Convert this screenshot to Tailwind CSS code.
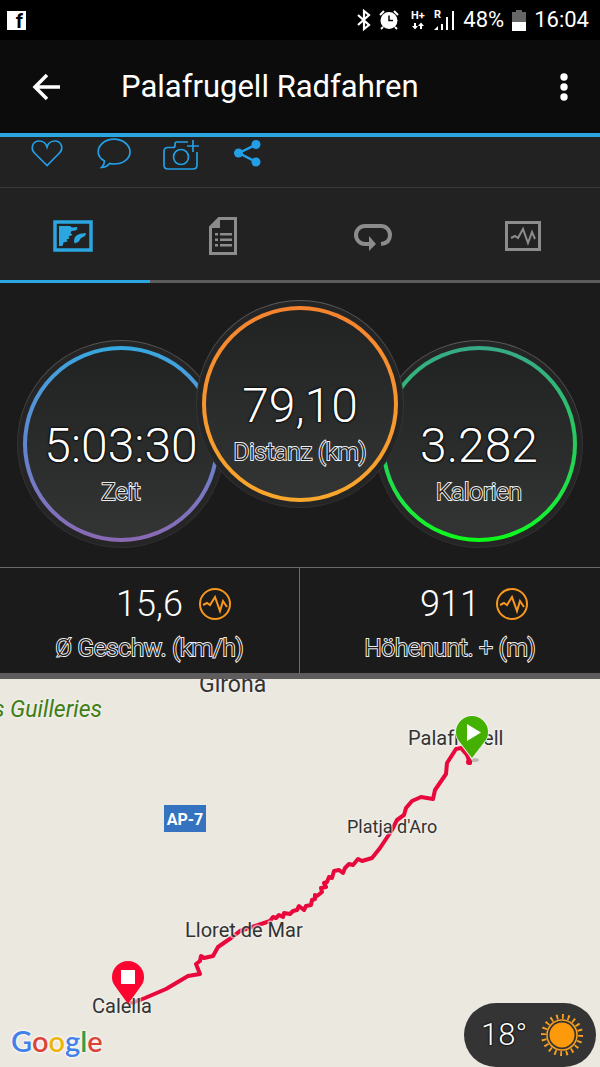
<!DOCTYPE html>
<html lang="de">
<head>
  <meta charset="UTF-8" />
  <meta name="viewport" content="width=device-width, initial-scale=1.0" />
  <title>Palafrugell Radfahren</title>
  <script src="https://cdn.jsdelivr.net/npm/@tailwindcss/browser@4"></script>
</head>
<body class="flex min-h-screen flex-col bg-[#1b1b1b] font-['Roboto',sans-serif] text-white">

  <!-- Status bar -->
  <div class="flex h-10 items-center justify-between bg-black pr-[11px] pl-[7px]">
    <div class="flex size-[19px] justify-end bg-white pr-[3px] text-[20px] leading-[20px] font-bold text-black">f</div>
    <div class="flex items-center gap-2 text-[22px] leading-6">
      <svg class="h-[22px] w-[14px]" viewBox="0 0 14 22" fill="none" stroke="#fff" stroke-width="2.200"><path d="M1 6l11 10-5 4V2l5 4L1 16" /></svg>
      <svg class="mr-1 size-5" viewBox="0 0 20 20" fill="none">
        <path d="M1 5l4-4M19 5l-4-4M4 17l-2 2M16 17l2 2" stroke="#fff" stroke-width="2" />
        <circle cx="10" cy="10.500" r="8.500" fill="#fff" />
        <path d="M10 5.500v5h4" stroke="#000" stroke-width="1.500" />
      </svg>
      <svg class="h-5 w-[15px]" viewBox="0 0 15 20" fill="#fff">
        <text x="0" y="9" font-size="11" font-weight="700">H+</text>
        <path d="M3 13h2v3h2l-3 3.500L1 16h2zM9 19h2v-3h2l-3-3.500L7 16h2z" />
      </svg>
      <svg class="h-5 w-[21px]" viewBox="0 0 21 20" fill="#fff">
        <text x="0" y="8" font-size="11" font-weight="700">R</text>
        <path d="M0 20l4-4v4zM7 14h2v6H7zM12 7h2v13h-2zM18 1h2v19h-2z" />
      </svg>
      <span>48%</span>
      <svg class="h-[21px] w-[14px]" viewBox="0 0 14 21">
        <path d="M4 0h6v2h4v10H0V2h4z" fill="#666" />
        <path d="M0 12h14v9H0z" fill="#fff" />
      </svg>
      <span>16:04</span>
    </div>
  </div>

  <!-- App bar -->
  <header class="flex h-[97px] items-center border-b-4 border-[#2ba6e1] bg-[#0c0c0c] pr-5 pl-8">
    <button aria-label="Zurück" class="flex w-[89px] items-center">
      <svg class="h-7 w-[30px]" viewBox="0 0 30 28" fill="none" stroke="#fff" stroke-width="3.500"><path d="M28 14H4M15 2L3 14l12 12" /></svg>
    </button>
    <h1 class="flex-1 text-[31px] leading-9">Palafrugell Radfahren</h1>
    <button aria-label="Mehr" class="flex w-8 justify-center">
      <svg class="h-7 w-2" viewBox="0 0 8 28" fill="#fff"><circle cx="4" cy="4" r="3.700" /><circle cx="4" cy="14" r="3.700" /><circle cx="4" cy="24" r="3.700" /></svg>
    </button>
  </header>

  <!-- Social actions -->
  <div class="flex h-[51px] items-start border-b border-[#3a3a3a] bg-[#222] pl-[13px] text-[#229fe6]">
    <button aria-label="Gefällt mir" class="flex w-[67px] justify-center">
      <svg class="h-8 w-9" viewBox="0 0 36 32" fill="none" stroke="currentColor" stroke-width="1.700"><path d="M18 28.500L6 16.500C.5 11 4 4 10 4c4 0 7 2.500 8 6 1-3.500 4-6 8-6 6 0 9.500 7 4 12.500z" /></svg>
    </button>
    <button aria-label="Kommentar" class="flex w-[67px] justify-center">
      <svg class="h-8 w-9" viewBox="0 0 36 32" fill="none" stroke="currentColor" stroke-width="1.700"><path d="M8.500 24C4 21.500 2.200 18.500 2.200 15 2.200 8 9 2.200 18 2.200S34 8 34 15s-7 12-16 12c-1.500 0-3-.2-4.500-.5-2 2.500-4.500 4-8 4 2-2 3-4 3-6.500z" /></svg>
    </button>
    <button aria-label="Foto hinzufügen" class="flex w-[67px] justify-center">
      <svg class="h-[34px] w-9" viewBox="0 0 36 34" fill="none" stroke="currentColor" stroke-width="1.700">
        <path d="M25 5H14q-2 0-2 2v1.500q0 2-2 2H5q-4 0-4 4V28q0 4 4 4h25q4 0 4-4V15" />
        <circle cx="18" cy="20" r="7.500" />
        <path d="M30 3v12M24 9h12" />
      </svg>
    </button>
    <button aria-label="Teilen" class="flex w-[67px] justify-center">
      <svg class="h-8 w-9" viewBox="0 0 36 32" fill="currentColor">
        <path d="M26 7.500L9 16l17 9" fill="none" stroke="currentColor" stroke-width="2.500" />
        <circle cx="8.500" cy="16" r="4.500" /><circle cx="26" cy="7.500" r="4.500" /><circle cx="26" cy="25" r="4.500" />
      </svg>
    </button>
  </div>

  <!-- Tabs -->
  <nav class="grid h-[95px] grid-cols-4 bg-[#222] text-[#8c8c8c]">
    <button aria-label="Karte" class="flex items-center justify-center border-b-[3px] border-[#2ba6e1] pt-1 pr-1 text-[#2ba6e1]">
      <svg class="h-8 w-10" viewBox="0 0 40 32" fill="currentColor">
        <path d="M2 2h36v28H2z" fill="none" stroke="currentColor" stroke-width="3.500" />
        <path d="M6 6h11l2 1.500 5-.5.500 2-2 1.500-4 .5-1 2 2 2-4 1.500 1 2-3 1 1 2-4 1-1 3.500H6zM22 17q3-3.500 7-3.500l4-.5q0 3-4 4.500-2 1-3 4l-4 2q-2-2 0-6.500z" />
      </svg>
    </button>
    <button aria-label="Details" class="flex items-center justify-center border-b-[3px] border-[#5c5c5c] pt-1 pr-1">
      <svg class="h-[38px] w-7" viewBox="0 0 28 38" fill="currentColor">
        <path d="M10 1.500h16.500v35h-25V10z" fill="none" stroke="currentColor" stroke-width="3" />
        <path d="M11 1v10H1zM6 16h3v2.500H6zM11 16h12v2.500H11zM6 21.500h3V24H6zM11 21.500h12V24H11zM6 27h3v2.500H6zM11 27h12v2.500H11z" />
      </svg>
    </button>
    <button aria-label="Runden" class="flex items-center justify-center border-b-[3px] border-[#5c5c5c] pt-1 pr-1">
      <svg class="mt-1 h-7 w-[38px]" viewBox="0 0 38 28" fill="none" stroke="currentColor" stroke-width="4">
        <path d="M16 20h-5a9 9 0 0 1 0-18h16a9 9 0 0 1 9 9q0 8-9 9" />
        <path d="M15 12l7 8-7 7z" fill="currentColor" stroke="none" />
      </svg>
    </button>
    <button aria-label="Diagramme" class="flex items-center justify-center border-b-[3px] border-[#5c5c5c] pt-1 pr-1">
      <svg class="h-[30px] w-9" viewBox="0 0 36 30" fill="none" stroke="currentColor">
        <path d="M1.500 1.500h33v27h-33z" stroke-width="3" />
        <path d="M6 17l4-2 3 2 5-9 5 14 4-11 3 7" stroke-width="2" />
      </svg>
    </button>
  </nav>

  <!-- Gauges -->
  <section class="flex h-[284px] justify-center pt-[17px]">
    <div class="mt-10 size-[208px] shrink-0 rounded-full bg-linear-to-b from-[#5a5452] via-[#333] to-[#303030] p-px">
      <div class="size-full rounded-full bg-[#252525] p-[5px]">
        <div class="size-full rounded-full bg-linear-to-b from-[#35a8e0] via-[#5f86d0] to-[#8a68b4] p-1">
          <div class="flex size-full flex-col items-center rounded-full bg-linear-to-b from-[#212222] to-[#333434] pt-[68px]">
            <div class="text-5xl leading-14 font-light [text-shadow:0_0_2px_#000,0_0_2px_#000,0_0_2px_#000]">5:03:30</div>
            <div class="text-2xl leading-9 font-light text-[#1b1b1b] [paint-order:stroke_fill] [-webkit-text-stroke:2px_#eee]">Zeit</div>
          </div>
        </div>
      </div>
    </div>
    <div class="z-10 -mx-[29px] size-[208px] shrink-0 rounded-full bg-linear-to-b from-[#5a5c60] via-[#333] to-[#303030] p-px">
      <div class="size-full rounded-full bg-[#252525] p-[5px]">
        <div class="size-full rounded-full bg-linear-to-b from-[#f5832f] to-[#f9a72c] p-1">
          <div class="flex size-full flex-col items-center rounded-full bg-linear-to-b from-[#212222] to-[#333434] pt-[68px]">
            <div class="text-5xl leading-14 font-light [text-shadow:0_0_2px_#000,0_0_2px_#000,0_0_2px_#000]">79,10</div>
            <div class="text-2xl leading-9 font-light text-[#1b1b1b] [paint-order:stroke_fill] [-webkit-text-stroke:2px_#eee]">Distanz (km)</div>
          </div>
        </div>
      </div>
    </div>
    <div class="mt-10 size-[208px] shrink-0 rounded-full bg-linear-to-b from-[#5a5a5a] via-[#333] to-[#303030] p-px">
      <div class="size-full rounded-full bg-[#252525] p-[5px]">
        <div class="size-full rounded-full bg-linear-to-b from-[#37a987] via-[#25cc5a] to-[#0cfa14] p-1">
          <div class="flex size-full flex-col items-center rounded-full bg-linear-to-b from-[#212222] to-[#333434] pt-[68px]">
            <div class="text-5xl leading-14 font-light [text-shadow:0_0_2px_#000,0_0_2px_#000,0_0_2px_#000]">3.282</div>
            <div class="text-2xl leading-9 font-light text-[#1b1b1b] [paint-order:stroke_fill] [-webkit-text-stroke:2px_#eee]">Kalorien</div>
          </div>
        </div>
      </div>
    </div>
  </section>

  <!-- Averages -->
  <section class="grid h-28 grid-cols-2 border-t border-b-[6px] border-t-[#6a6a6a] border-b-[#5e5c5c]">
    <div class="border-r border-[#6a6a6a] pt-[14px] text-center">
      <div class="grid grid-cols-[1fr_auto_1fr] items-center gap-4">
        <span class="col-start-2 text-4xl leading-11 font-light">15,6</span>
        <svg class="size-8" viewBox="0 0 32 32" fill="none" stroke="#f7981d" stroke-width="2"><circle cx="16" cy="16" r="15" /><path d="M4 17l4-2 3 2 5-8 5 14 3-10 4 6" /></svg>
      </div>
      <div class="text-2xl leading-11 font-light text-[#1b1b1b] [paint-order:stroke_fill] [-webkit-text-stroke:2px_#eee]">Ø Geschw. (km/h)</div>
    </div>
    <div class="pt-[14px] text-center">
      <div class="grid grid-cols-[1fr_auto_1fr] items-center gap-4">
        <span class="col-start-2 text-4xl leading-11 font-light">911</span>
        <svg class="size-8" viewBox="0 0 32 32" fill="none" stroke="#f7981d" stroke-width="2"><circle cx="16" cy="16" r="15" /><path d="M4 17l4-2 3 2 5-8 5 14 3-10 4 6" /></svg>
      </div>
      <div class="text-2xl leading-11 font-light text-[#1b1b1b] [paint-order:stroke_fill] [-webkit-text-stroke:2px_#eee]">Höhenunt. + (m)</div>
    </div>
  </section>

  <!-- Map -->
  <main class="relative min-h-[388px] flex-1 overflow-hidden bg-[#ebe8e0]">
    <svg class="absolute inset-0 size-full" viewBox="0 0 600 388" preserveAspectRatio="xMidYMin slice">
      <path d="M470 84l-3-8-6-7-5 1-9 14-1 11-11 16-2 9-12-2-9 4-6 7-2 7-7 5-5 10-12 18-8 10-10 3-4-2-5 6-4-1-4 4-2 5-4-3-5 1-2 7-3-1-2 5-3 1 2 4-5 1 1 4-5 4-2-1v4l-3 1-1 5-5 1-2 4-5-4-2 4-4 1-3 3-6-1-1 4-4-2-3 3-3-1-3 4-30 10-9 7-13 9-5 9-9 2-3-2-1 5-4 3 4 10-12 2-22 13-21 9-13 5" fill="none" stroke="#e8083c" stroke-width="4" stroke-linejoin="round" stroke-linecap="round" />
      <g fill="#333" stroke="#f3f1ec" stroke-width="3" stroke-opacity=".6" stroke-linejoin="round" paint-order="stroke" font-size="20">
        <text x="199" y="13" font-size="23">Girona</text>
        <text x="102" y="38" text-anchor="end" font-size="23" font-style="italic" fill="#3f7d15">s Guilleries</text>
        <text x="408" y="66">Palafrugell</text>
        <text x="347" y="154" font-size="18">Platja d'Aro</text>
        <text x="185" y="258">Lloret de Mar</text>
        <text x="92" y="334">Calella</text>
      </g>
      <path d="M164 126h42v27h-42z" fill="#3572c0" />
      <text x="185" y="146" text-anchor="middle" font-size="16" font-weight="700" fill="#fff">AP-7</text>
      <ellipse cx="474" cy="81" rx="5" ry="2" fill="#000" fill-opacity=".2" />
      <circle cx="469" cy="83" r="3" fill="#e8083c" />
      <path d="M472 79l-13-17c-2-3-3-5-3-9a16 16 0 0 1 32 0c0 4-1 6-3 9z" fill="#43b002" stroke="#f3f1ec" stroke-width="2" paint-order="stroke" />
      <path d="M467 45v17l14-8.500z" fill="#fff" />
      <path d="M128 325l-13-18c-2-3-3-5-3-9a16 16 0 0 1 32 0c0 4-1 6-3 9z" fill="#fb0430" />
      <path d="M121 291h14v14h-14z" fill="#fff" />
    </svg>
    <a href="#" aria-label="Google" class="absolute bottom-2 left-[11px] font-['Lato',sans-serif] text-[29px] leading-9 font-semibold [text-shadow:0_0_3px_#fff,0_0_3px_#fff]"><span class="text-[#4280ea]">G</span><span class="text-[#db4437]">o</span><span class="text-[#edb50c]">o</span><span class="text-[#4280ea]">g</span><span class="text-[#2f9e4f]">l</span><span class="text-[#db4437]">e</span></a>
    <div class="absolute right-1 bottom-0 flex h-16 w-[132px] items-center justify-between rounded-full bg-[#343434] pr-3 pl-[17px]">
      <span class="text-[31px] leading-9 font-light [text-shadow:0_0_2px_#000,0_0_2px_#000]">18°</span>
      <svg class="size-11" viewBox="0 0 44 44" fill="none" stroke="#f9a11f">
        <circle cx="22" cy="22" r="12.500" fill="#fd9a0b" stroke="none" />
        <circle cx="22" cy="22" r="15" stroke-width="1.500" />
        <circle cx="22" cy="22" r="18.500" stroke-width="5" pathLength="160" stroke-dasharray="2.500 5.500" />
      </svg>
    </div>
  </main>

</body>
</html>
